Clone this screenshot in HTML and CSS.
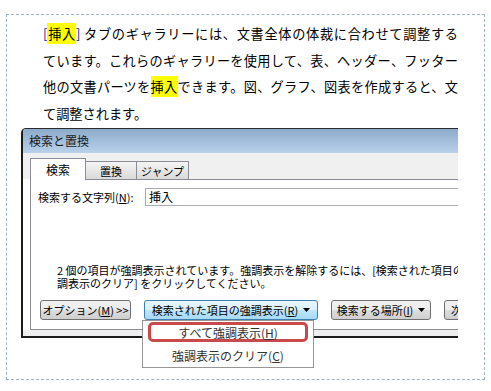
FILE: index.html
```html
<!DOCTYPE html>
<html lang="ja">
<head>
    <meta charset="UTF-8">
    <title>検索と置換</title>
    <link rel="stylesheet" href="styles.css">
</head>
<body>
    <div class="page">
        <div class="text">
            <div class="line"><span class="bracket">[</span><span class="mark">挿入</span><span class="bracket">]</span> タブのギャラリーには、文書全体の体裁に合わせて調整する</div>
            <div class="line">ています。これらのギャラリーを使用して、表、ヘッダー、フッター</div>
            <div class="line">他の文書パーツを<span class="mark">挿入</span>できます。図、グラフ、図表を作成すると、文</div>
            <div class="line last">て調整されます。</div>
        </div>

        <!-- 検索と置換ダイアログ -->
        <div class="dialog-wrap">
            <div class="dialog">
                <div class="title-bar">検索と置換</div>
                <div class="tab-strip">
                    <div class="tab active">検索</div>
                    <div class="tab tab-replace">置換</div>
                    <div class="tab tab-jump">ジャンプ</div>
                </div>
                <div class="panel">
                    <div class="find-row">
                        <label class="find-label">検索する文字列(<u>N</u>):</label>
                        <div class="find-input">挿入</div>
                    </div>
                    <p class="message">2 個の項目が強調表示されています。強調表示を解除するには、[検索された項目の強調表示] の [強<br>調表示のクリア] をクリックしてください。</p>
                    <div class="buttons">
                        <button class="btn btn-options"><span>オプション(<u>M</u>) &gt;&gt;</span></button>
                        <button class="btn btn-highlight hover"><span>検索された項目の強調表示(<u>R</u>)</span>
                            <svg class="arrow" width="7" height="4" viewBox="0 0 7 4"><path d="M0 0h7L3.5 4z" fill="#000"/></svg>
                        </button>
                        <button class="btn btn-where"><span>検索する場所(<u>I</u>)</span>
                            <svg class="arrow" width="7" height="4" viewBox="0 0 7 4"><path d="M0 0h7L3.5 4z" fill="#000"/></svg>
                        </button>
                        <button class="btn btn-next"><span>次を検索(<u>F</u>)</span></button>
                    </div>
                </div>
                <div class="dialog-foot"></div>
            </div>

            <!-- 強調表示メニュー -->
            <div class="menu">
                <div class="menu-item selected">すべて強調表示(<u>H</u>)</div>
                <div class="menu-item">強調表示のクリア(<u>C</u>)</div>
            </div>
        </div>
    </div>
</body>
</html>
```

FILE: styles.css
```css
* {
    margin: 0;
    padding: 0;
    box-sizing: border-box;
}

body {
    font-family: "Noto Sans CJK JP", "Noto Sans", sans-serif;
    background: #fff;
    color: #000;
}

.page {
    margin: 14px 0 0 6px;
    width: 479px;
    height: 366px;
    border: 1px dashed #9cb4cb;
}

.text {
    height: 113px;
    padding: 6px 0 0 36px;
    font-size: 13.2px;
    line-height: 26.7px;
}

.line {
    width: 415px;
    text-align: justify;
    text-align-last: justify;
}

.line.last {
    text-align-last: left;
}

.mark {
    background: #ffff00;
    padding: 1px 0;
}

.bracket {
    color: #28288f;
}

.dialog-wrap {
    position: relative;
    margin-left: 14px;
    width: 437px;
}

.dialog {
    overflow: hidden;
    border-top: 1px solid #2b2b2b;
    border-left: 2px solid #1b1b1b;
    border-top-left-radius: 5px;
    background: #fff;
}

.title-bar {
    height: 24px;
    padding-left: 6px;
    background: linear-gradient(#8dabcb, #b9d1ea);
    font-size: 12px;
    line-height: 24px;
    color: #1a1a1a;
}

.tab-strip {
    height: 26px;
    display: flex;
    align-items: flex-end;
    padding-left: 7px;
    background: #f0f0f0;
}

.tab {
    height: 18px;
    margin-left: -1px;
    border: 1px solid #898c95;
    border-bottom: none;
    background: linear-gradient(#f4f4f4, #dadada);
    font-size: 11px;
    display: flex;
    align-items: center;
    justify-content: center;
}

.tab.active {
    position: relative;
    z-index: 1;
    width: 56px;
    height: 22px;
    margin: 0 0 -1px 0;
    background: #fff;
    font-size: 12px;
}

.tab-replace {
    width: 52px;
}

.tab-jump {
    width: 53px;
}

.panel {
    height: 151px;
    margin-left: 7px;
    border: 1px solid #898c95;
    border-right: none;
    background: #fff;
    overflow: hidden;
}

.find-row {
    display: flex;
    align-items: center;
    margin-top: 8px;
    padding-left: 7px;
    font-size: 11px;
}

.find-label {
    width: 107px;
}

.find-input {
    flex: 1;
    height: 18px;
    padding-left: 3px;
    border: 1px solid #abadb3;
    border-right: none;
    font-size: 12px;
    line-height: 16px;
}

.message {
    margin-top: 58px;
    padding-left: 26px;
    font-size: 11px;
    line-height: 12.5px;
    white-space: nowrap;
}

.buttons {
    display: flex;
    gap: 13px;
    margin-top: 11px;
    padding-left: 9px;
}

.btn {
    flex: none;
    height: 20px;
    display: flex;
    align-items: center;
    justify-content: center;
    gap: 5px;
    border: 1px solid #707070;
    border-radius: 3px;
    background: linear-gradient(#f2f2f2 0%, #ebebeb 50%, #dddddd 51%, #cfcfcf 100%);
    font-family: "Noto Sans CJK JP", sans-serif;
    font-size: 11px;
    line-height: 14px;
    color: #000;
    white-space: nowrap;
}

.btn.hover {
    border-color: #3c7fb1;
    background: linear-gradient(#eaf6fd 0%, #d9f0fc 50%, #bee6fd 51%, #a7d9f5 100%);
}

.btn-options {
    width: 91px;
}

.btn-highlight {
    width: 174px;
}

.btn-where {
    width: 100px;
}

.btn-next {
    width: 80px;
    justify-content: flex-start;
    padding-left: 6px;
}

.arrow {
    flex: none;
}

.dialog-foot {
    height: 8px;
    background: #eeeeee;
    border-bottom: 2px solid #1b1b1b;
}

.menu {
    position: absolute;
    left: 121px;
    top: 192px;
    width: 172px;
    height: 48px;
    border: 1px solid #979797;
    background: #fff;
    font-size: 12px;
    color: #333;
}

.menu-item {
    height: 26px;
    display: flex;
    align-items: center;
    justify-content: center;
}

.menu-item.selected {
    height: 20px;
    margin: 1px 5px 0;
    border: 3px solid #c94a4c;
    border-radius: 5px;
}
```
